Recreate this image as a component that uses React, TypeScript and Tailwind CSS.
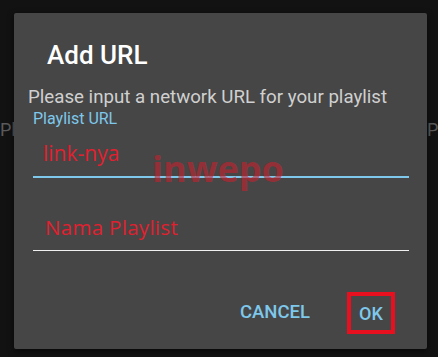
export default function App() {
  return (
    <div className="relative w-[438px] h-[357px] overflow-hidden bg-[#121212] font-['Roboto',sans-serif]">
      {/* list behind the dialog */}
      <div className="absolute left-0 top-[116px] text-[18px] text-[#5a5a5a]">Pl</div>
      <div className="absolute left-[427px] top-[116px] text-[18px] text-[#5a5a5a]">P</div>

      <div className="relative ml-[14px] mt-[13px] w-[413px] h-[336px] rounded-[2px] bg-[#464646] shadow-[0_2px_6px_rgba(0,0,0,0.6)] flex flex-col">
        <h2 className="pl-[33px] pt-[27px] text-[26px] leading-[30px] font-medium text-white">Add URL</h2>
        <p className="pl-[14px] pt-[16px] text-[18.7px] leading-[22px] text-[#d0d0d0]">
          Please input a network URL for your playlist
        </p>

        <div className="ml-[19px] w-[376px]">
          <div className="pt-[2px] text-[16px] leading-[18px] text-[#7ec8ec]">Playlist URL</div>
          <div className="pl-[10px] pt-[14px] pb-[12px] text-[21px] leading-[22px] text-[#e2202f] font-['Open_Sans',sans-serif]">
            link-nya
          </div>
          <div className="h-[2px] bg-[#7ec8ec]" />

          <div className="pl-[12px] pt-[38px] pb-[12px] text-[20.5px] leading-[22px] tracking-[0.3px] text-[#e2202f] font-['Open_Sans',sans-serif]">
            Nama Playlist
          </div>
          <div className="h-px bg-[#f0f0f0]" />
        </div>

        <div className="mt-auto mb-[15px] mr-[32px] flex items-center justify-end gap-[37px]">
          <button className="text-[18.5px] font-medium text-[#7ec8ec]">CANCEL</button>
          <div className="w-[48px] h-[42px] border-[4px] border-[#e8101e] flex items-center justify-center">
            <button className="text-[18px] font-medium text-[#7ec8ec]">OK</button>
          </div>
        </div>
      </div>

      {/* watermark */}
      <div className="absolute left-[152px] top-[142px] text-[36px] font-bold text-[#c8202c]/60 font-['Open_Sans',sans-serif]">
        inwepo
      </div>
    </div>
  );
}
